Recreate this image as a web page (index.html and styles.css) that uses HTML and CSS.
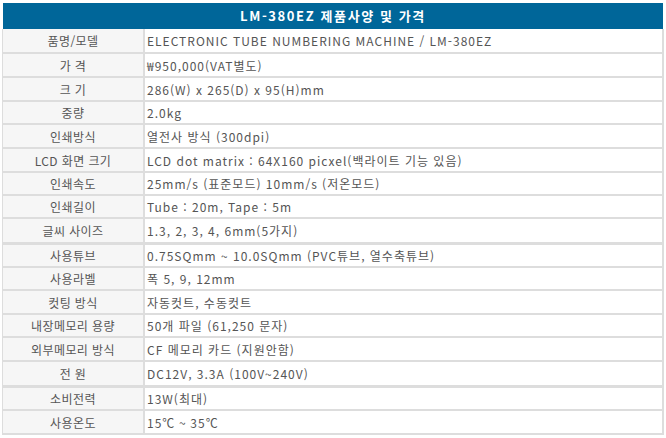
FILE: index.html
```html
<!DOCTYPE html>
<html lang="ko">
<head>
<meta charset="utf-8">
<link rel="stylesheet" href="styles.css">
</head>
<body>
<div class="spec">
  <div class="title">LM-380EZ 제품사양 및 가격</div>
  <table class="grid">
    <tr class="h24"><th>품명/모델</th><td>ELECTRONIC TUBE NUMBERING MACHINE / LM-380EZ</td></tr>
    <tr class="h24"><th>가 격</th><td>₩950,000(VAT별도)</td></tr>
    <tr class="h24"><th>크 기</th><td>286(W) x 265(D) x 95(H)mm</td></tr>
    <tr class="h23"><th>중량</th><td>2.0kg</td></tr>
    <tr class="h24"><th>인쇄방식</th><td>열전사 방식 (300dpi)</td></tr>
    <tr class="h24"><th>LCD 화면 크기</th><td>LCD dot matrix : 64X160 picxel(백라이트 기능 있음)</td></tr>
    <tr class="h23"><th>인쇄속도</th><td>25mm/s (표준모드) 10mm/s (저온모드)</td></tr>
    <tr class="h23"><th>인쇄길이</th><td>Tube : 20m, Tape : 5m</td></tr>
    <tr class="h25 thick"><th>글씨 사이즈</th><td>1.3, 2, 3, 4, 6mm(5가지)</td></tr>
    <tr class="h24"><th>사용튜브</th><td>0.75SQmm ~ 10.0SQmm (PVC튜브, 열수축튜브)</td></tr>
    <tr class="h23"><th>사용라벨</th><td>폭 5, 9, 12mm</td></tr>
    <tr class="h24"><th>컷팅 방식</th><td>자동컷트, 수동컷트</td></tr>
    <tr class="h23"><th>내장메모리 용량</th><td>50개 파일 (61,250 문자)</td></tr>
    <tr class="h24"><th>외부메모리 방식</th><td>CF 메모리 카드 (지원안함)</td></tr>
    <tr class="h25 thick"><th>전 원</th><td>DC12V, 3.3A (100V~240V)</td></tr>
    <tr class="h24"><th>소비전력</th><td>13W(최대)</td></tr>
    <tr class="h24"><th>사용온도</th><td>15℃ ~ 35℃</td></tr>
  </table>
</div>
</body>
</html>
```

FILE: styles.css
```css
html, body {
  margin: 0;
  padding: 0;
  background: #ffffff;
}

.spec {
  width: 662px;
  margin: 3px 0 0 2px;
  font-family: "Noto Sans CJK KR", "Noto Sans", sans-serif;
}

.title {
  margin-left: 1px;
  width: 660px;
  height: 26px;
  background: #006699;
  color: #ffffff;
  font-weight: bold;
  font-size: 13px;
  line-height: 26px;
  text-align: center;
  letter-spacing: 1.6px;
}

.grid {
  width: 662px;
  border-collapse: collapse;
  border-left: 1px solid #dddddd;
  border-right: 2px solid #dddddd;
  table-layout: fixed;
}

.grid th,
.grid td {
  font-size: 12px;
  font-weight: normal;
  color: #555555;
  padding: 0;
  border-bottom: 2px solid #dddddd;
  white-space: nowrap;
  overflow: hidden;
}

.grid th {
  width: 140px;
  background: #f6f6f6;
  text-align: center;
  border-right: 2px solid #dddddd;
  letter-spacing: 0.4px;
}

.grid td {
  background: #ffffff;
  text-align: left;
  padding-left: 2px;
  letter-spacing: 1px;
}

.h24 { height: 24px; }
.h23 { height: 23px; }
.h25 { height: 25px; }
.thick th, .thick td { border-bottom-width: 3px; }
```
